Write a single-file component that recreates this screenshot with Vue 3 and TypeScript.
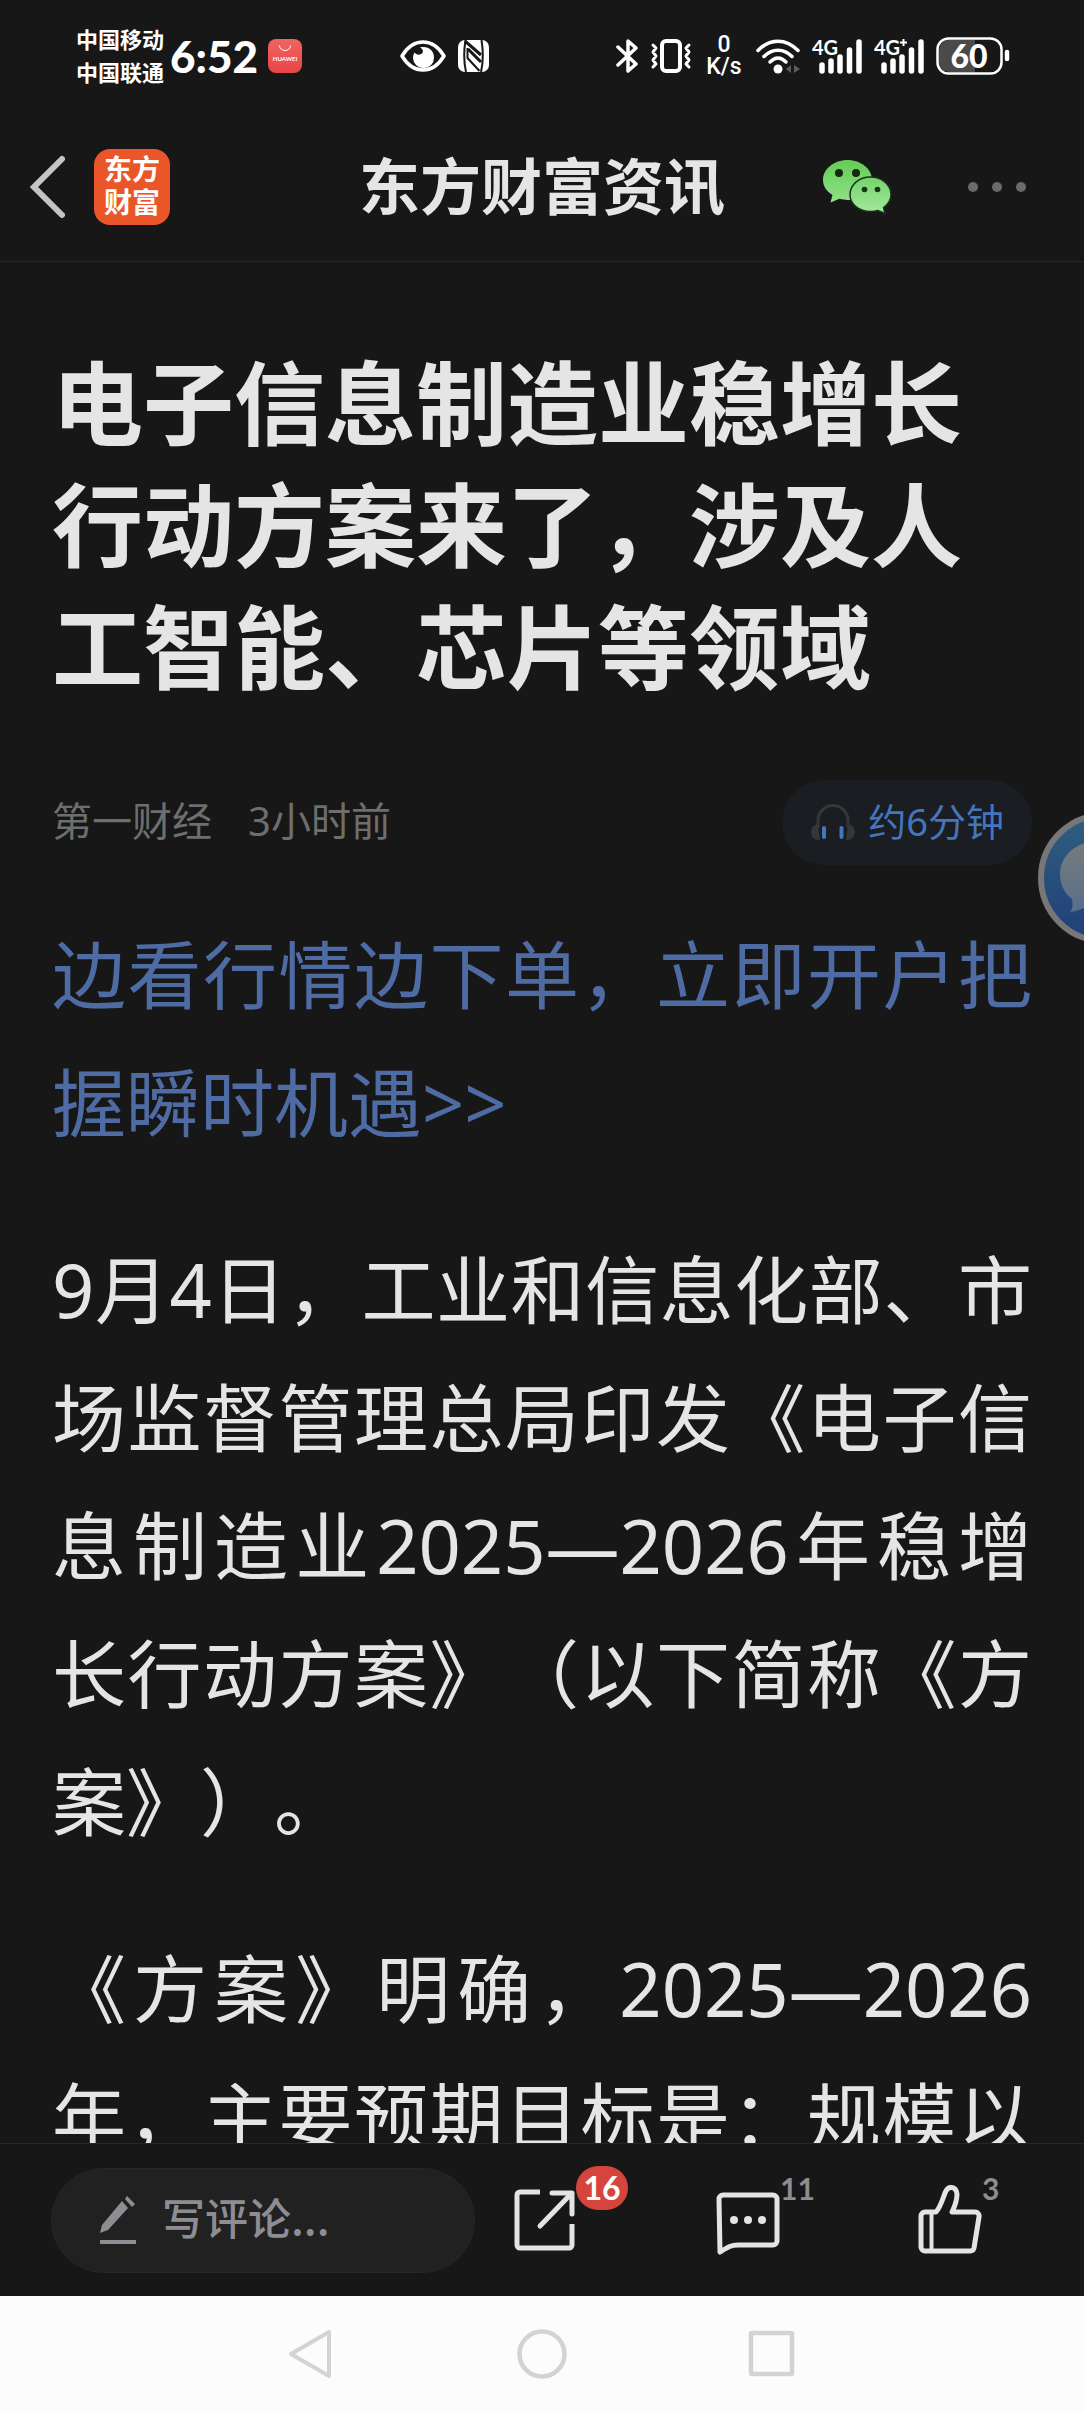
<script setup lang="ts">
import { ref } from 'vue'

interface Signal {
  id: string
  label: string
  plus: boolean
}

const signals: Signal[] = [
  { id: 'sim1', label: '4G', plus: false },
  { id: 'sim2', label: '4G', plus: true },
]

const comment = ref('')
const shareCount = 16
const commentCount = 11
const likeCount = 3
</script>

<template>
  <div class="screen">
    <div class="status">
      <div class="carriers">
        <span>中国移动</span>
        <span>中国联通</span>
      </div>
      <span class="time">6:52</span>
      <span class="store">
        <svg viewBox="0 0 34 34" width="34" height="34" aria-hidden="true">
          <defs>
            <linearGradient id="storeBg" x1="0" y1="0" x2="0" y2="1">
              <stop offset="0" stop-color="#ef6461" />
              <stop offset="1" stop-color="#e84545" />
            </linearGradient>
          </defs>
          <rect width="34" height="34" rx="8" fill="url(#storeBg)" />
          <path d="M11.500 6.500a5.500 5 0 0 0 11 0" fill="none" stroke="#fff" stroke-width="1" />
          <text x="17" y="22" text-anchor="middle" class="store-text">HUAWEI</text>
        </svg>
      </span>
      <svg class="eye" viewBox="0 0 46 32" width="46" height="32" aria-hidden="true">
        <path d="M2 16C8 6 15 2 23 2s15 4 21 14c-6 10-13 14-21 14S8 26 2 16Z" fill="none" stroke="#fff" stroke-width="3.500" stroke-linejoin="round" />
        <path d="M20 7.500c8-2 14 3 14 10a10.500 10.500 0 0 1-21 .500c0-2 .500-4 1.500-5.500a5 5 0 0 0 8 .500c1-2 .500-4-2.500-5.500Z" fill="#fff" />
      </svg>
      <svg class="nfc" viewBox="0 0 31 32" width="31" height="32" aria-hidden="true">
        <rect width="31" height="32" rx="7" fill="#fff" />
        <path d="M7.500 0C6 9 6 23 8 32M23 32c2-9 2-23 .500-32" fill="none" stroke="#171717" stroke-width="2" />
        <path d="M7 1l16 14M10 9l13 13" fill="none" stroke="#171717" stroke-width="3" />
        <path d="M9.500 8v10l12 13" fill="none" stroke="#171717" stroke-width="2" />
      </svg>

      <div class="status-right">
        <svg viewBox="0 0 22 36" width="22" height="36" aria-hidden="true">
          <path d="M2 9l18 17-8 7V3l8 7L2 27" fill="none" stroke="#fff" stroke-width="3.500" stroke-linecap="round" stroke-linejoin="round" />
        </svg>
        <svg viewBox="0 0 42 34" width="42" height="34" aria-hidden="true">
          <rect x="12" y="2" width="18" height="30" rx="4" fill="none" stroke="#fff" stroke-width="4" />
          <path d="M3 6l3 3-3 4 3 4-3 4 3 4-3 3M39 6l-3 3 3 4-3 4 3 4-3 4 3 3" fill="none" stroke="#fff" stroke-width="3" stroke-linecap="round" stroke-linejoin="round" />
        </svg>
        <div class="speed">
          <span>0</span>
          <span>K/s</span>
        </div>
        <svg viewBox="0 0 44 36" width="44" height="36" aria-hidden="true">
          <g fill="none" stroke="#fff" stroke-width="3.500" stroke-linecap="round">
            <path d="M2 12.500c12-12.500 28-12.500 40 0" />
            <path d="M8 18.500c8-8.500 20-8.500 28 0" />
            <path d="M14 24c5-5.500 11-5.500 16 0" />
          </g>
          <circle cx="22" cy="31" r="4.500" fill="#fff" />
          <path d="M35 27v8l-5-4ZM38 27v8l6-4Z" fill="#5c5c5c" />
        </svg>
        <svg v-for="s in signals" :key="s.id" viewBox="0 -6 50 48" width="50" height="48" aria-hidden="true">
          <text x="0" y="17" class="signal-text">{{ s.label }}</text>
          <path v-if="s.plus" d="M26 4.500h7M29.500 1v7" stroke="#fff" stroke-width="2" fill="none" />
          <path d="M10 27v6M19 23v10M28 19v14M37.500 12v21M47 4v29" fill="none" stroke="#fff" stroke-width="5.500" stroke-linecap="round" />
        </svg>
        <svg viewBox="0 0 74 38" width="74" height="38" aria-hidden="true">
          <path d="M39 3H13A10 10 0 0 0 3 13v12a10 10 0 0 0 10 10h26Z" fill="#4a4a4a" />
          <rect x="1.500" y="1.500" width="64" height="35" rx="11" fill="none" stroke="#fff" stroke-width="2.500" />
          <path d="M71 15v7" stroke="#fff" stroke-width="4.500" stroke-linecap="round" />
          <text x="33" y="31" text-anchor="middle" class="battery-text">60</text>
        </svg>
      </div>
    </div>

    <header class="header">
      <div class="header-left">
        <button class="plain" type="button" aria-label="返回">
          <svg viewBox="0 0 36 64" width="36" height="64">
            <path d="M32 4 4 32l28 28" fill="none" stroke="#c4c4c4" stroke-width="6" stroke-linecap="round" stroke-linejoin="miter" />
          </svg>
        </button>
        <a class="logo" href="#">东方<br />财富</a>
      </div>
      <h2 class="header-title">东方财富资讯</h2>
      <div class="header-right">
        <button class="plain" type="button" aria-label="微信分享">
          <svg viewBox="0 0 69 56" width="69" height="56">
            <defs>
              <linearGradient id="wxBig" x1="0" y1="0" x2="0" y2="1">
                <stop offset="0" stop-color="#63cc55" />
                <stop offset="1" stop-color="#92e18a" />
              </linearGradient>
              <linearGradient id="wxSmall" x1="0" y1="0" x2="0" y2="1">
                <stop offset="0" stop-color="#74d36a" />
                <stop offset="1" stop-color="#a6e8a0" />
              </linearGradient>
            </defs>
            <path d="M24.500 1C38 1 49 10 49 21S38 41 24.500 41c-3 0-5.500-.500-8-1.200L7.500 43.500l2-7.500C3.500 32.500 0 27 0 21 0 10 11 1 24.500 1Z" fill="url(#wxBig)" />
            <path d="M47.500 18C59 18 68 26 68 35.500c0 5.500-3 10-7.500 13L62 54.500l-7-3c-2.500.700-5 1-7.500 1C36 52.500 27 45 27 35.500S36 18 47.500 18Z" fill="url(#wxSmall)" stroke="#17351a" stroke-width="1.500" />
            <circle cx="16" cy="14" r="4" fill="#17260f" />
            <circle cx="33" cy="14" r="4" fill="#17260f" />
            <circle cx="41.500" cy="30.500" r="2.800" fill="#17351a" />
            <circle cx="54.500" cy="30.500" r="2.800" fill="#17351a" />
          </svg>
        </button>
        <button class="plain" type="button" aria-label="更多">
          <svg viewBox="0 0 58 12" width="58" height="12">
            <g fill="#6b6b6b">
              <circle cx="5" cy="6" r="5" />
              <circle cx="29" cy="6" r="5" />
              <circle cx="53" cy="6" r="5" />
            </g>
          </svg>
        </button>
      </div>
    </header>

    <main class="main">
      <article class="article">
        <h1 class="title">电子信息制造业稳增长行动方案来了，涉及人工智能、芯片等领域</h1>
        <div class="meta">
          <span class="label">第一财经</span>
          <time class="label">3小时前</time>
          <button class="listen" type="button">
            <svg viewBox="0 0 46 37" width="46" height="37" aria-hidden="true">
              <path d="M8 24V16.500a15 15 0 0 1 30 0V24" fill="none" stroke="#363636" stroke-width="3" />
              <path d="M6.500 20.500H8L10 36H8a8 8 0 0 1-1.500-15.500ZM39.500 20.500H38L36 36h2a8 8 0 0 0 1.500-15.500Z" fill="#363636" />
              <path d="M14 24v9M31.500 24v9" stroke="#4475bd" stroke-width="4" stroke-linecap="round" />
            </svg>
            <span class="label">约6分钟</span>
          </button>
        </div>
        <p class="text"><a class="promo" href="#">边看行情边下单，立即开户把握瞬时机遇&gt;&gt;</a></p>
        <p class="text">9月4日，工业和信息化部、市场监督管理总局印发《电子信息制造业2025—2026年稳增长行动方案》（以下简称《方案》）。</p>
        <p class="text run-on">《方案》明确，2025—2026年，主要预期目标是：规模以</p>
      </article>
      <button class="float" type="button" aria-label="消息">
        <svg viewBox="0 0 132 132" width="132" height="132">
          <defs>
            <linearGradient id="floatBg" x1="0" y1="0" x2="0" y2="1">
              <stop offset="0" stop-color="#2f5f80" />
              <stop offset="1" stop-color="#213f78" />
            </linearGradient>
            <linearGradient id="floatBubble" x1="0" y1="0" x2="0" y2="1">
              <stop offset="0" stop-color="#7a7a7a" />
              <stop offset="1" stop-color="#56708c" />
            </linearGradient>
          </defs>
          <circle cx="66" cy="66" r="63" fill="url(#floatBg)" stroke="#777" stroke-width="6" />
          <path d="M66 28c26 0 44 14 44 34S92 95 66 95c-6 0-11-1-16-2-5 4-11 6-18 7 3-4 3-8 2-13-8-6-12-15-12-25 0-20 18-34 44-34Z" fill="url(#floatBubble)" />
        </svg>
      </button>
    </main>

    <footer class="toolbar">
      <label class="write">
        <svg viewBox="0 0 36 50" width="36" height="50" aria-hidden="true">
          <path d="M0 38l2-8L22 6l6 7L8 35ZM25 4l2-3 8 8-3 3Z" fill="#8e8d93" />
          <path d="M0 47h36" stroke="#8e8d93" stroke-width="4" />
        </svg>
        <input v-model="comment" type="text" placeholder="写评论..." aria-label="写评论" />
      </label>
      <div class="actions">
        <button class="action" type="button" aria-label="分享">
          <svg viewBox="0 0 64 70" width="64" height="70">
            <g fill="none" stroke="#e4e4e4" stroke-width="5" stroke-linecap="round" stroke-linejoin="round">
              <path d="M26 7H6a3 3 0 0 0-3 3v50a3 3 0 0 0 3 3h49a3 3 0 0 0 3-3V39" stroke-linecap="butt" />
              <path d="M38 8h20v21M56 10 26 41" />
            </g>
          </svg>
          <span class="badge">{{ shareCount }}</span>
        </button>
        <button class="action" type="button" aria-label="评论">
          <svg viewBox="0 0 64 70" width="64" height="70">
            <path d="M3 14a4 4 0 0 1 4-4h50a4 4 0 0 1 4 4v42a4 4 0 0 1-4 4H22c-7 0-10 2-18 7Z" fill="none" stroke="#e4e4e4" stroke-width="5" stroke-linejoin="round" />
            <g fill="#e4e4e4">
              <circle cx="18" cy="35" r="4" />
              <circle cx="32" cy="35" r="4" />
              <circle cx="46" cy="35" r="4" />
            </g>
          </svg>
          <span class="count">{{ commentCount }}</span>
        </button>
        <button class="action" type="button" aria-label="点赞">
          <svg viewBox="0 0 64 70" width="64" height="70">
            <g fill="none" stroke="#e4e4e4" stroke-width="5" stroke-linejoin="round">
              <path d="M18 27c4-4 6-11 9-19 3-8 11-7 12 1 0 6-2 12-5 18h23a4 4 0 0 1 4 5l-5 31a4 4 0 0 1-4 3H7a4 4 0 0 1-4-4V31a4 4 0 0 1 4-4h11Z" />
              <path d="M13.500 28v38" stroke-width="4" />
            </g>
          </svg>
          <span class="count">{{ likeCount }}</span>
        </button>
      </div>
    </footer>

    <nav class="nav" aria-label="系统导航">
      <button class="plain" type="button" aria-label="返回上一页">
        <svg viewBox="0 0 50 50" width="50" height="50">
          <path d="M42 3v44L4 25Z" fill="none" stroke="#d3d3d3" stroke-width="4" stroke-linejoin="round" />
        </svg>
      </button>
      <button class="plain" type="button" aria-label="主屏幕">
        <svg viewBox="0 0 50 50" width="50" height="50">
          <circle cx="25" cy="25" r="22.500" fill="none" stroke="#d3d3d3" stroke-width="4.500" />
        </svg>
      </button>
      <button class="plain" type="button" aria-label="最近任务">
        <svg viewBox="0 0 50 50" width="50" height="50">
          <rect x="4" y="4" width="41" height="41" rx="1" fill="none" stroke="#d3d3d3" stroke-width="4.500" />
        </svg>
      </button>
    </nav>
  </div>
</template>

<style>
body {
  margin: 0;
  background: #171717;
}
</style>

<style scoped>
.screen {
  display: flex;
  flex-direction: column;
  height: 100vh;
  overflow: hidden;
  background: #171717;
  color: #e5e5e5;
  font-family: "Noto Sans", "Noto Sans CJK SC", sans-serif;
  text-spacing-trim: space-all;
}

svg {
  display: block;
  flex: none;
}

button {
  margin: 0;
  padding: 0;
  border: 0;
  background: none;
  color: inherit;
  font: inherit;
}

/* status bar */
.status {
  display: flex;
  align-items: center;
  flex: none;
  height: 112px;
  padding: 0 74px 0 76px;
  color: #fff;
}

.carriers {
  display: flex;
  flex-direction: column;
  font-size: 22px;
  font-weight: 700;
  line-height: 33px;
}

.time {
  width: 98px;
  margin-left: 6px;
  font-family: Lato, sans-serif;
  font-size: 44px;
  font-weight: 900;
  line-height: 48px;
}

.store-text {
  fill: #fff;
  font-family: Lato, sans-serif;
  font-size: 6px;
  font-weight: 700;
}

.eye {
  margin-left: 98px;
}

.nfc {
  margin-left: 12px;
}

.status-right {
  display: flex;
  align-items: center;
  gap: 12px;
  margin-left: auto;
}

.speed {
  display: flex;
  flex-direction: column;
  align-items: center;
  width: 40px;
  font-family: Roboto, sans-serif;
  font-size: 23px;
  font-weight: 500;
  line-height: 22px;
}

.signal-text {
  fill: #fff;
  font-family: Lato, sans-serif;
  font-size: 20px;
  font-weight: 700;
}

.battery-text {
  fill: #fff;
  font-family: Lato, sans-serif;
  font-size: 32px;
  font-weight: 900;
}

/* app header */
.header {
  display: grid;
  grid-template-columns: 1fr auto 1fr;
  align-items: center;
  flex: none;
  box-sizing: border-box;
  height: 150px;
  padding: 0 58px 0 30px;
  border-bottom: 1px solid #262626;
}

.header-left {
  display: flex;
  align-items: center;
  gap: 28px;
}

.logo {
  display: block;
  padding: 4px 10px 6px;
  border-radius: 16px;
  background: #ea5529;
  color: #fff;
  font-size: 28px;
  font-weight: 700;
  line-height: 33px;
  text-decoration: none;
}

.header-title {
  margin: 0 0 0 28px;
  font-size: 61px;
  font-weight: 700;
  line-height: 88px;
}

.header-right {
  display: flex;
  align-items: center;
  justify-content: flex-end;
  gap: 76px;
}

/* article */
.main {
  position: relative;
  flex: 1;
  min-height: 0;
  overflow: hidden;
}

.article {
  padding: 80px 52px 0;
}

.title {
  margin: 0;
  font-size: 91px;
  font-weight: 700;
  line-height: 122px;
}

.meta {
  display: flex;
  align-items: center;
  gap: 36px;
  margin: 72px 0 46px;
  color: #6e6e6e;
  font-size: 40px;
  line-height: 60px;
}

.label {
  padding-bottom: 4px;
}

.listen {
  display: flex;
  align-items: center;
  gap: 12px;
  height: 85px;
  margin-left: auto;
  padding: 0 28px;
  border-radius: 43px;
  background: #1a1d21;
  color: #4475bd;
  font-size: 38px;
}

.text {
  margin: 0 0 59px;
  font-size: 74px;
  line-height: 128px;
  text-align: justify;
}

.run-on {
  text-align-last: justify;
}

.promo {
  color: #4f6ba3;
  text-decoration: none;
}

.float {
  position: absolute;
  top: 550px;
  right: -86px;
}

/* comment toolbar */
.toolbar {
  display: flex;
  align-items: center;
  flex: none;
  box-sizing: border-box;
  height: 153px;
  padding: 0 102px 0 51px;
  border-top: 1px solid #262626;
}

.write {
  display: flex;
  align-items: center;
  gap: 26px;
  flex: 0 1 424px;
  box-sizing: border-box;
  min-width: 0;
  height: 105px;
  padding: 0 48px;
  border: 1px solid #262626;
  border-radius: 53px;
  background: #212121;
}

.write input {
  flex: 1;
  width: 0;
  min-width: 0;
  padding: 0 0 8px;
  border: 0;
  outline: 0;
  background: none;
  color: #e5e5e5;
  font: 500 43px/60px "Noto Sans CJK SC", sans-serif;
}

.write input::placeholder {
  color: #8e8d93;
  opacity: 1;
}

.actions {
  display: flex;
  justify-content: space-between;
  flex: 1;
  margin-left: 39px;
}

.action {
  position: relative;
}

.badge,
.count {
  position: absolute;
  left: 100%;
  font-family: Lato, sans-serif;
  font-size: 30px;
  font-weight: 700;
}

.badge {
  top: -19px;
  left: 62px;
  min-width: 52px;
  border-radius: 22px;
  background: #d6453d;
  color: #fff;
  font-size: 32px;
  line-height: 44px;
}

.count {
  top: -15px;
  color: #8e8d93;
  line-height: 36px;
}

/* system navigation */
.nav {
  display: flex;
  align-items: center;
  justify-content: center;
  gap: 180px;
  flex: none;
  height: 116px;
  background: #fcfcfc;
}
</style>
